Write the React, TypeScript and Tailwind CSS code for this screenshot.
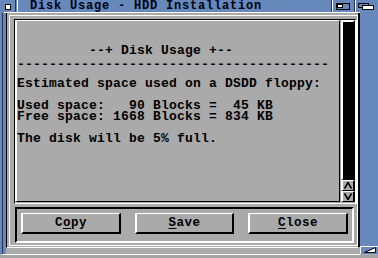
import React from "react"

const lines = [
  "         --+ Disk Usage +--",
  "---------------------------------------",
  "",
  "Estimated space used on a DSDD floppy:",
  "",
  "Used space:   90 Blocks =  45 KB",
  "Free space: 1668 Blocks = 834 KB",
  "",
  "The disk will be 5% full.",
]

const TitleBar: React.FC = () => {
  return (
    <div className="flex w-[378px] h-[12px] bg-[#6688bb]">
      <div className="w-[15px] shrink-0 pl-[5px] pt-[4px]">
        <div className="w-[6px] h-[6px] bg-white border border-black" />
      </div>
      <div className="w-[1px] shrink-0 bg-[#223355]" />
      <div className="w-[1px] shrink-0" />
      <div className="w-[1px] shrink-0 bg-white" />
      <div className="w-[313px] shrink-0 pl-[12px] pt-[1px] text-[12px] leading-[11px] tracking-[0.8px] text-[#000011] whitespace-pre">
        Disk Usage - HDD Installation
      </div>
      <div className="w-[1px] shrink-0 bg-[#223355]" />
      <div className="w-[1px] shrink-0 bg-white" />
      <div className="w-[21px] shrink-0 pl-[3px] pt-[3px]">
        <svg width="14" height="7" viewBox="0 0 14 7" className="block">
          <rect x="0.5" y="0.5" width="13" height="6" fill="none" stroke="#000" />
          <rect x="1.5" y="1.5" width="5" height="3" fill="#fff" stroke="#000" />
        </svg>
      </div>
      <div className="w-[1px] shrink-0 bg-[#223355]" />
      <div className="w-[1px] shrink-0 bg-white" />
      <div className="w-[22px] shrink-0 pl-[2px] pt-[3px]">
        <svg width="16" height="7" viewBox="0 0 16 7" className="block">
          <rect x="0.5" y="0.5" width="10" height="4" fill="none" stroke="#000" />
          <rect x="4.5" y="2.5" width="11" height="4" fill="#fff" stroke="#000" />
        </svg>
      </div>
    </div>
  )
}

const Arrow: React.FC<{ up?: boolean }> = ({ up }) => {
  return (
    <div className="h-[11px] flex items-center justify-center bg-[#aaaaaa] border-l-2 border-t border-white border-r-2 border-r-black border-b border-b-black">
      <svg width="8" height="7" viewBox="0 0 8 7" className="block">
        {up ? (
          <polyline points="0.5,6.5 4,0.5 7.5,6.5" fill="none" stroke="#000" strokeWidth="1.6" />
        ) : (
          <polyline points="0.5,0.5 4,6.5 7.5,0.5" fill="none" stroke="#000" strokeWidth="1.6" />
        )}
      </svg>
    </div>
  )
}

const Button: React.FC<{ label: React.ReactNode; w: string }> = ({ label, w }) => {
  return (
    <div
      className={`${w} h-[21px] flex items-center justify-center border-l-2 border-t border-white border-r-2 border-r-black border-b-2 border-b-black text-[12.5px] leading-[12px] tracking-[0.5px] whitespace-pre`}
    >
      {label}
    </div>
  )
}

export default function App() {
  return (
    <div className="w-[378px] h-[258px] overflow-hidden bg-[#aaaaaa] flex flex-col font-['Liberation_Mono',monospace] font-bold text-black">
      <TitleBar />
      {/* top edge under title */}
      <div className="h-[1px] flex">
        <div className="w-[4px] bg-[#6688bb]" />
        <div className="w-[356px] bg-white" />
        <div className="flex-1 bg-[#6688bb]" />
      </div>
      <div className="flex h-[241px]">
        {/* left border */}
        <div className="w-[6px] flex">
          <div className="w-[2px] bg-[#6688bb]" />
          <div className="w-[1px] bg-[#223355]" />
          <div className="w-[3px] bg-[#6688bb]" />
        </div>
        <div className="w-[352px] flex flex-col">
          <div className="h-[235px] border-l border-black border-b border-b-white pl-[2px] pr-[2px] pt-[2px] pb-[1px] flex">
            {/* group frame */}
            <div className="flex-1 border border-white pl-[2px] pt-[3px] pb-[2px] flex flex-col">
              {/* list view */}
              <div className="h-[185px] ml-[2px] border-l border-t border-black border-r-2 border-r-white border-b border-b-white pb-[1px] flex">
                <div className="w-[325px] border-l-2 border-t border-white border-r border-r-black border-b border-b-black pt-[24px] text-[13px] tracking-[0.2px] leading-[11px] whitespace-pre">
                  {lines.map((l, i) =>
                    i === 1 ? (
                      <div key={i} className="h-[11px] pt-[3px]">
                        {l}
                      </div>
                    ) : (
                      <div key={i} className="h-[11px]">
                        {l}
                      </div>
                    )
                  )}
                </div>
                <div className="w-[1px]" />
                <div className="w-[14px] flex flex-col">
                  <div className="flex-1 border-l-2 border-t-2 border-white border-r-2 border-r-black border-b border-b-black flex">
                    <div className="flex-1 bg-black" />
                  </div>
                  <Arrow up />
                  <Arrow />
                </div>
              </div>
              <div className="h-[3px]" />
              {/* button group */}
              <div className="h-[36px] ml-[3px] w-[339px] border-l-2 border-t-2 border-black border-r-2 border-r-white border-b-2 border-b-white pl-[4px] pt-[4px] flex gap-[14px] items-start">
                <Button
                  w="w-[100px]"
                  label={
                    <>
                      C<span className="underline underline-offset-2">o</span>py
                    </>
                  }
                />
                <Button
                  w="w-[99px]"
                  label={
                    <>
                      <span className="underline underline-offset-2">S</span>ave
                    </>
                  }
                />
                <Button
                  w="w-[100px]"
                  label={
                    <>
                      <span className="underline underline-offset-2">C</span>lose
                    </>
                  }
                />
              </div>
            </div>
          </div>
          <div className="flex-1" />
        </div>
        <div className="w-[2px] flex flex-col">
          <div className="h-[234px] bg-black" />
        </div>
        {/* right border with size gadget */}
        <div className="flex-1 flex flex-col">
          <div className="flex-1 bg-[#6688bb]" />
          <div className="h-[8px] bg-[#6688bb] border-t border-l border-white flex items-end justify-end pr-[2px] pb-[1px]">
            <svg width="12" height="6" viewBox="0 0 12 6" className="block">
              <polygon points="0.5,5.5 11.5,5.5 11.5,0.5" fill="#fff" stroke="#000" strokeWidth="1" />
            </svg>
          </div>
        </div>
      </div>
      <div className="h-[1px] ml-[2px] w-[358px] bg-white" />
      <div className="flex-1 bg-[#a4a4a4]" />
    </div>
  )
}
